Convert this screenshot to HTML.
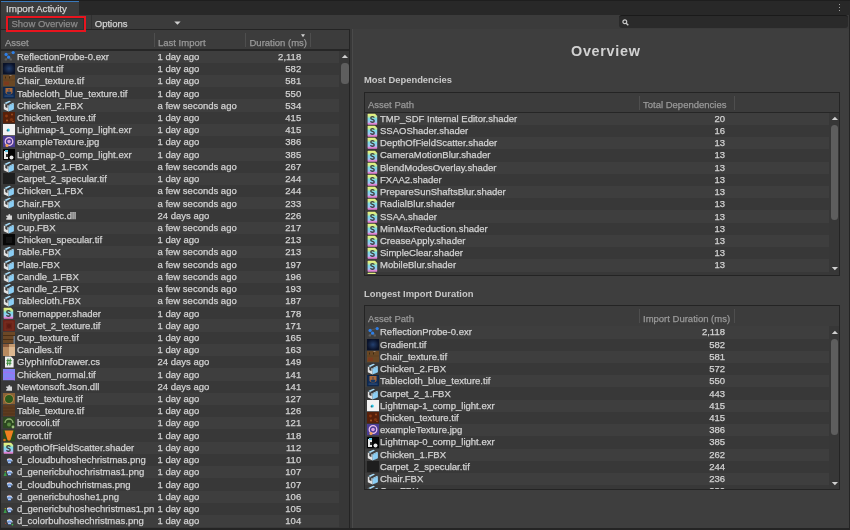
<!DOCTYPE html>
<html><head><meta charset="utf-8"><style>
*{box-sizing:border-box;margin:0;padding:0}
html,body{width:850px;height:530px;overflow:hidden;background:#282828}
#root{position:absolute;left:0;top:0;width:850px;height:530px;will-change:transform;overflow:hidden}
body{position:relative;font-family:"Liberation Sans",sans-serif;font-size:9.5px;color:#d2d2d2}
.a{position:absolute}
.t{position:absolute;white-space:nowrap;line-height:12px;top:0;-webkit-text-stroke:0.25px currentColor}
.ht{color:#999999}
.bold{font-weight:bold;font-size:9.4px;color:#c8c8c8;-webkit-text-stroke:0}
.hdr{background:#3c3c3c;border-bottom:2px solid #262626}
.sep{position:absolute;width:1px;background:#4e4e4e}
.row{position:absolute;height:12.22px}
.ic{position:absolute;display:block;width:12px;height:12px}
.sb{background:#373737}
.thumb{position:absolute;background:#5e5e5e;border-radius:3.5px}
.tri-u{position:absolute;width:0;height:0;border-left:3px solid transparent;border-right:3px solid transparent;border-bottom:3.5px solid #c4c4c4}
.tri-d{position:absolute;width:0;height:0;border-left:3px solid transparent;border-right:3px solid transparent;border-top:3.5px solid #c4c4c4}
.tri-s{position:absolute;width:0;height:0;border-left:1.8px solid transparent;border-right:1.8px solid transparent;border-top:2.9px solid #d0d0d0}
.tri-d.big{border-left-width:3.1px;border-right-width:3.1px;border-top-width:3.4px}
</style></head><body><div id="root">

<div class="a" style="left:0;top:29px;width:350px;height:501px;background:#383838;border:1px solid #242424;border-right-color:#242424"></div>
<div class="a hdr" style="left:1px;top:30px;width:348px;height:21px"></div>
<div class="sep" style="left:153.8px;top:33px;height:14.2px"></div>
<div class="sep" style="left:245px;top:33px;height:14.2px"></div>
<div class="sep" style="left:310px;top:33px;height:14.2px"></div>
<span class="t ht" style="left:5px;top:37.2px">Asset</span>
<span class="t ht" style="left:158px;top:37.2px">Last Import</span>
<span class="t ht" style="left:249.5px;top:37.2px">Duration (ms)</span>
<svg class="a" style="left:300px;top:33px" width="6" height="5" viewBox="0 0 6 5"><path d="M1 1.2 L5 1.2 L3 4.2 Z" fill="#d0d0d0"/></svg>
<div class="a" style="left:1px;top:51px;width:338px;height:477px;overflow:hidden"></div>
<div class="a" style="left:0;top:0;width:339px;height:528px;overflow:hidden"><div class="row" style="left:1px;top:50.60px;width:338px;background:#3e3e3e"><svg class="ic" style="left:2px;top:0.2px" width="12" height="12" viewBox="0 0 12 12"><path d="M3 3.3 L10.2 1.4 M5.5 6.2 L2.8 8.2 M5.5 6.2 L7.8 8.2" stroke="#5a5a5a" stroke-width="0.8" fill="none"/><circle cx="2.8" cy="8.4" r="1.2" fill="#5e5e5e"/><circle cx="7.8" cy="8.4" r="1.2" fill="#5e5e5e"/><circle cx="3.1" cy="3.4" r="1.6" fill="#2f7fe6"/><circle cx="5.6" cy="6.2" r="1.6" fill="#2f7fe6"/><circle cx="10.2" cy="1.6" r="1.6" fill="#2f7fe6"/></svg><span class="t" style="left:16px;top:0.3px;width:136.5px;overflow:hidden">ReflectionProbe-0.exr</span><span class="t" style="left:156.5px;top:0.3px">1 day ago</span><span class="t" style="left:239.2px;top:0.3px;width:61px;text-align:right">2,118</span></div><div class="row" style="left:1px;top:62.82px;width:338px;background:#383838"><svg class="ic" style="left:2px;top:0.2px" width="12" height="12" viewBox="0 0 12 12"><defs><radialGradient id="g1"><stop offset="0" stop-color="#24406f"/><stop offset="1" stop-color="#0a1228"/></radialGradient></defs><rect x="0" y="0" width="12" height="11.2" fill="url(#g1)"/></svg><span class="t" style="left:16px;top:0.3px;width:136.5px;overflow:hidden">Gradient.tif</span><span class="t" style="left:156.5px;top:0.3px">1 day ago</span><span class="t" style="left:239.2px;top:0.3px;width:61px;text-align:right">582</span></div><div class="row" style="left:1px;top:75.04px;width:338px;background:#3e3e3e"><svg class="ic" style="left:2px;top:0.2px" width="12" height="12" viewBox="0 0 12 12"><rect x="0" y="0" width="12" height="11.2" fill="#6a4824"/><rect x="1" y="6.5" width="5" height="3.5" fill="#7c3a1e"/><rect x="2" y="1.5" width="1" height="2" fill="#3a2812"/><rect x="6" y="1.5" width="1" height="2" fill="#3a2812"/><rect x="6.5" y="0" width="2" height="0.8" fill="#a09080"/><path d="M0 5 H12" stroke="#5a3a1c" stroke-width="0.5"/></svg><span class="t" style="left:16px;top:0.3px;width:136.5px;overflow:hidden">Chair_texture.tif</span><span class="t" style="left:156.5px;top:0.3px">1 day ago</span><span class="t" style="left:239.2px;top:0.3px;width:61px;text-align:right">581</span></div><div class="row" style="left:1px;top:87.26px;width:338px;background:#383838"><svg class="ic" style="left:2px;top:0.2px" width="12" height="12" viewBox="0 0 12 12"><rect x="0" y="0" width="12" height="11.2" fill="#13305a"/><rect x="0.8" y="0.4" width="10.4" height="10.4" fill="none" stroke="#0c2242" stroke-width="0.8"/><path d="M2.5 1 L9.5 1 L9.5 6 Q6 9 2.5 6 Z" fill="#a8683a"/><path d="M3.5 5 Q6 4 8.5 5 Q8 7.5 6 7.6 Q4 7.5 3.5 5 Z" fill="#143866"/><circle cx="6" cy="3" r="0.8" fill="#2a3a5a"/><rect x="1.5" y="8.5" width="9" height="1.2" fill="#2a4a7a"/></svg><span class="t" style="left:16px;top:0.3px;width:136.5px;overflow:hidden">Tablecloth_blue_texture.tif</span><span class="t" style="left:156.5px;top:0.3px">1 day ago</span><span class="t" style="left:239.2px;top:0.3px;width:61px;text-align:right">550</span></div><div class="row" style="left:1px;top:99.48px;width:338px;background:#3e3e3e"><svg class="ic" style="left:2px;top:0.2px" width="12" height="12" viewBox="0 0 12 12"><path d="M0.8 3.6 L5.6 5.8 L5.6 11.5 L0.8 9.3 Z" fill="#e2e2e2"/><path d="M2.3 4.3 L4.4 5.3 L4.4 8.3 L2.3 7.1 Z" fill="#3c3c3c"/><path d="M5.6 5.8 L10.9 3.4 L10.9 9.3 L5.6 11.5 Z" fill="#8ed0f6"/><path d="M8.2 4.6 L8.2 10.4" stroke="#7cc0e8" stroke-width="0.5"/><path d="M1.3 3.1 L6.3 0.7 L8 1.6 L3.1 4 Z" fill="#a6daf6"/><path d="M5.2 5.2 L10.2 2.8 L10.9 3.4 L5.6 5.8 Z" fill="#a6daf6"/></svg><span class="t" style="left:16px;top:0.3px;width:136.5px;overflow:hidden">Chicken_2.FBX</span><span class="t" style="left:156.5px;top:0.3px">a few seconds ago</span><span class="t" style="left:239.2px;top:0.3px;width:61px;text-align:right">534</span></div><div class="row" style="left:1px;top:111.70px;width:338px;background:#383838"><svg class="ic" style="left:2px;top:0.2px" width="12" height="12" viewBox="0 0 12 12"><rect x="0" y="0" width="12" height="11.2" fill="#56200a"/><circle cx="3.5" cy="4" r="1.4" fill="#8a3812"/><circle cx="8.5" cy="7.5" r="1.6" fill="#7e3410"/><circle cx="4" cy="8.5" r="0.9" fill="#b0602a"/><circle cx="9" cy="2.5" r="0.9" fill="#a05020"/><circle cx="10" cy="9.5" r="0.6" fill="#c07030"/></svg><span class="t" style="left:16px;top:0.3px;width:136.5px;overflow:hidden">Chicken_texture.tif</span><span class="t" style="left:156.5px;top:0.3px">1 day ago</span><span class="t" style="left:239.2px;top:0.3px;width:61px;text-align:right">415</span></div><div class="row" style="left:1px;top:123.92px;width:338px;background:#3e3e3e"><svg class="ic" style="left:2px;top:0.2px" width="12" height="12" viewBox="0 0 12 12"><rect x="0" y="0" width="12" height="11.2" fill="#f2f2f2"/><circle cx="5.3" cy="6" r="1.5" fill="#2ad0f0"/><circle cx="4.5" cy="6.5" r="1" fill="#203040" opacity="0.6"/></svg><span class="t" style="left:16px;top:0.3px;width:136.5px;overflow:hidden">Lightmap-1_comp_light.exr</span><span class="t" style="left:156.5px;top:0.3px">1 day ago</span><span class="t" style="left:239.2px;top:0.3px;width:61px;text-align:right">415</span></div><div class="row" style="left:1px;top:136.14px;width:338px;background:#383838"><svg class="ic" style="left:2px;top:0.2px" width="12" height="12" viewBox="0 0 12 12"><rect x="0" y="0" width="12" height="11.2" fill="#4a3c94"/><circle cx="6" cy="5.5" r="3.8" fill="none" stroke="#e8c0e8" stroke-width="1.3"/><circle cx="6" cy="5.5" r="1.8" fill="#d8a0e0"/><circle cx="4" cy="9.5" r="1.6" fill="#f0a050"/></svg><span class="t" style="left:16px;top:0.3px;width:136.5px;overflow:hidden">exampleTexture.jpg</span><span class="t" style="left:156.5px;top:0.3px">1 day ago</span><span class="t" style="left:239.2px;top:0.3px;width:61px;text-align:right">386</span></div><div class="row" style="left:1px;top:148.36px;width:338px;background:#3e3e3e"><svg class="ic" style="left:2px;top:0.2px" width="12" height="12" viewBox="0 0 12 12"><rect x="0" y="0" width="12" height="11.2" fill="#050505"/><rect x="1" y="2" width="4" height="8" fill="#e8e8e8"/><rect x="2" y="1" width="3" height="2" fill="#60c8e8"/><circle cx="8.5" cy="8.5" r="2" fill="#e8e8e8"/><rect x="3" y="5" width="2" height="3" fill="#303030"/></svg><span class="t" style="left:16px;top:0.3px;width:136.5px;overflow:hidden">Lightmap-0_comp_light.exr</span><span class="t" style="left:156.5px;top:0.3px">1 day ago</span><span class="t" style="left:239.2px;top:0.3px;width:61px;text-align:right">385</span></div><div class="row" style="left:1px;top:160.58px;width:338px;background:#383838"><svg class="ic" style="left:2px;top:0.2px" width="12" height="12" viewBox="0 0 12 12"><path d="M0.8 3.6 L5.6 5.8 L5.6 11.5 L0.8 9.3 Z" fill="#e2e2e2"/><path d="M2.3 4.3 L4.4 5.3 L4.4 8.3 L2.3 7.1 Z" fill="#3c3c3c"/><path d="M5.6 5.8 L10.9 3.4 L10.9 9.3 L5.6 11.5 Z" fill="#8ed0f6"/><path d="M8.2 4.6 L8.2 10.4" stroke="#7cc0e8" stroke-width="0.5"/><path d="M1.3 3.1 L6.3 0.7 L8 1.6 L3.1 4 Z" fill="#a6daf6"/><path d="M5.2 5.2 L10.2 2.8 L10.9 3.4 L5.6 5.8 Z" fill="#a6daf6"/></svg><span class="t" style="left:16px;top:0.3px;width:136.5px;overflow:hidden">Carpet_2_1.FBX</span><span class="t" style="left:156.5px;top:0.3px">a few seconds ago</span><span class="t" style="left:239.2px;top:0.3px;width:61px;text-align:right">267</span></div><div class="row" style="left:1px;top:172.80px;width:338px;background:#3e3e3e"><svg class="ic" style="left:2px;top:0.2px" width="12" height="12" viewBox="0 0 12 12"><rect x="0" y="0" width="12" height="11.2" fill="#1e1e1e"/></svg><span class="t" style="left:16px;top:0.3px;width:136.5px;overflow:hidden">Carpet_2_specular.tif</span><span class="t" style="left:156.5px;top:0.3px">1 day ago</span><span class="t" style="left:239.2px;top:0.3px;width:61px;text-align:right">244</span></div><div class="row" style="left:1px;top:185.02px;width:338px;background:#383838"><svg class="ic" style="left:2px;top:0.2px" width="12" height="12" viewBox="0 0 12 12"><path d="M0.8 3.6 L5.6 5.8 L5.6 11.5 L0.8 9.3 Z" fill="#e2e2e2"/><path d="M2.3 4.3 L4.4 5.3 L4.4 8.3 L2.3 7.1 Z" fill="#3c3c3c"/><path d="M5.6 5.8 L10.9 3.4 L10.9 9.3 L5.6 11.5 Z" fill="#8ed0f6"/><path d="M8.2 4.6 L8.2 10.4" stroke="#7cc0e8" stroke-width="0.5"/><path d="M1.3 3.1 L6.3 0.7 L8 1.6 L3.1 4 Z" fill="#a6daf6"/><path d="M5.2 5.2 L10.2 2.8 L10.9 3.4 L5.6 5.8 Z" fill="#a6daf6"/></svg><span class="t" style="left:16px;top:0.3px;width:136.5px;overflow:hidden">Chicken_1.FBX</span><span class="t" style="left:156.5px;top:0.3px">a few seconds ago</span><span class="t" style="left:239.2px;top:0.3px;width:61px;text-align:right">244</span></div><div class="row" style="left:1px;top:197.24px;width:338px;background:#3e3e3e"><svg class="ic" style="left:2px;top:0.2px" width="12" height="12" viewBox="0 0 12 12"><path d="M0.8 3.6 L5.6 5.8 L5.6 11.5 L0.8 9.3 Z" fill="#e2e2e2"/><path d="M2.3 4.3 L4.4 5.3 L4.4 8.3 L2.3 7.1 Z" fill="#3c3c3c"/><path d="M5.6 5.8 L10.9 3.4 L10.9 9.3 L5.6 11.5 Z" fill="#8ed0f6"/><path d="M8.2 4.6 L8.2 10.4" stroke="#7cc0e8" stroke-width="0.5"/><path d="M1.3 3.1 L6.3 0.7 L8 1.6 L3.1 4 Z" fill="#a6daf6"/><path d="M5.2 5.2 L10.2 2.8 L10.9 3.4 L5.6 5.8 Z" fill="#a6daf6"/></svg><span class="t" style="left:16px;top:0.3px;width:136.5px;overflow:hidden">Chair.FBX</span><span class="t" style="left:156.5px;top:0.3px">a few seconds ago</span><span class="t" style="left:239.2px;top:0.3px;width:61px;text-align:right">233</span></div><div class="row" style="left:1px;top:209.46px;width:338px;background:#383838"><svg class="ic" style="left:2px;top:0.2px" width="12" height="12" viewBox="0 0 12 12"><path d="M3.2 5.4 L5.4 5.4 L5.4 4.5 Q6.3 3.5 7.2 4.5 L7.2 5.4 L9 5.4 L9 9.8 L3.2 9.8 L3.2 8.4 Q4.4 8.4 4.4 7.6 Q4.4 6.8 3.2 6.8 Z" fill="#d6d6d6"/></svg><span class="t" style="left:16px;top:0.3px;width:136.5px;overflow:hidden">unityplastic.dll</span><span class="t" style="left:156.5px;top:0.3px">24 days ago</span><span class="t" style="left:239.2px;top:0.3px;width:61px;text-align:right">226</span></div><div class="row" style="left:1px;top:221.68px;width:338px;background:#3e3e3e"><svg class="ic" style="left:2px;top:0.2px" width="12" height="12" viewBox="0 0 12 12"><path d="M0.8 3.6 L5.6 5.8 L5.6 11.5 L0.8 9.3 Z" fill="#e2e2e2"/><path d="M2.3 4.3 L4.4 5.3 L4.4 8.3 L2.3 7.1 Z" fill="#3c3c3c"/><path d="M5.6 5.8 L10.9 3.4 L10.9 9.3 L5.6 11.5 Z" fill="#8ed0f6"/><path d="M8.2 4.6 L8.2 10.4" stroke="#7cc0e8" stroke-width="0.5"/><path d="M1.3 3.1 L6.3 0.7 L8 1.6 L3.1 4 Z" fill="#a6daf6"/><path d="M5.2 5.2 L10.2 2.8 L10.9 3.4 L5.6 5.8 Z" fill="#a6daf6"/></svg><span class="t" style="left:16px;top:0.3px;width:136.5px;overflow:hidden">Cup.FBX</span><span class="t" style="left:156.5px;top:0.3px">a few seconds ago</span><span class="t" style="left:239.2px;top:0.3px;width:61px;text-align:right">217</span></div><div class="row" style="left:1px;top:233.90px;width:338px;background:#383838"><svg class="ic" style="left:2px;top:0.2px" width="12" height="12" viewBox="0 0 12 12"><rect x="0" y="0" width="12" height="11.2" fill="#070707"/><rect x="3" y="3" width="6" height="6" fill="#141414"/></svg><span class="t" style="left:16px;top:0.3px;width:136.5px;overflow:hidden">Chicken_specular.tif</span><span class="t" style="left:156.5px;top:0.3px">1 day ago</span><span class="t" style="left:239.2px;top:0.3px;width:61px;text-align:right">213</span></div><div class="row" style="left:1px;top:246.12px;width:338px;background:#3e3e3e"><svg class="ic" style="left:2px;top:0.2px" width="12" height="12" viewBox="0 0 12 12"><path d="M0.8 3.6 L5.6 5.8 L5.6 11.5 L0.8 9.3 Z" fill="#e2e2e2"/><path d="M2.3 4.3 L4.4 5.3 L4.4 8.3 L2.3 7.1 Z" fill="#3c3c3c"/><path d="M5.6 5.8 L10.9 3.4 L10.9 9.3 L5.6 11.5 Z" fill="#8ed0f6"/><path d="M8.2 4.6 L8.2 10.4" stroke="#7cc0e8" stroke-width="0.5"/><path d="M1.3 3.1 L6.3 0.7 L8 1.6 L3.1 4 Z" fill="#a6daf6"/><path d="M5.2 5.2 L10.2 2.8 L10.9 3.4 L5.6 5.8 Z" fill="#a6daf6"/></svg><span class="t" style="left:16px;top:0.3px;width:136.5px;overflow:hidden">Table.FBX</span><span class="t" style="left:156.5px;top:0.3px">a few seconds ago</span><span class="t" style="left:239.2px;top:0.3px;width:61px;text-align:right">213</span></div><div class="row" style="left:1px;top:258.34px;width:338px;background:#383838"><svg class="ic" style="left:2px;top:0.2px" width="12" height="12" viewBox="0 0 12 12"><path d="M0.8 3.6 L5.6 5.8 L5.6 11.5 L0.8 9.3 Z" fill="#e2e2e2"/><path d="M2.3 4.3 L4.4 5.3 L4.4 8.3 L2.3 7.1 Z" fill="#3c3c3c"/><path d="M5.6 5.8 L10.9 3.4 L10.9 9.3 L5.6 11.5 Z" fill="#8ed0f6"/><path d="M8.2 4.6 L8.2 10.4" stroke="#7cc0e8" stroke-width="0.5"/><path d="M1.3 3.1 L6.3 0.7 L8 1.6 L3.1 4 Z" fill="#a6daf6"/><path d="M5.2 5.2 L10.2 2.8 L10.9 3.4 L5.6 5.8 Z" fill="#a6daf6"/></svg><span class="t" style="left:16px;top:0.3px;width:136.5px;overflow:hidden">Plate.FBX</span><span class="t" style="left:156.5px;top:0.3px">a few seconds ago</span><span class="t" style="left:239.2px;top:0.3px;width:61px;text-align:right">197</span></div><div class="row" style="left:1px;top:270.56px;width:338px;background:#3e3e3e"><svg class="ic" style="left:2px;top:0.2px" width="12" height="12" viewBox="0 0 12 12"><path d="M0.8 3.6 L5.6 5.8 L5.6 11.5 L0.8 9.3 Z" fill="#e2e2e2"/><path d="M2.3 4.3 L4.4 5.3 L4.4 8.3 L2.3 7.1 Z" fill="#3c3c3c"/><path d="M5.6 5.8 L10.9 3.4 L10.9 9.3 L5.6 11.5 Z" fill="#8ed0f6"/><path d="M8.2 4.6 L8.2 10.4" stroke="#7cc0e8" stroke-width="0.5"/><path d="M1.3 3.1 L6.3 0.7 L8 1.6 L3.1 4 Z" fill="#a6daf6"/><path d="M5.2 5.2 L10.2 2.8 L10.9 3.4 L5.6 5.8 Z" fill="#a6daf6"/></svg><span class="t" style="left:16px;top:0.3px;width:136.5px;overflow:hidden">Candle_1.FBX</span><span class="t" style="left:156.5px;top:0.3px">a few seconds ago</span><span class="t" style="left:239.2px;top:0.3px;width:61px;text-align:right">196</span></div><div class="row" style="left:1px;top:282.78px;width:338px;background:#383838"><svg class="ic" style="left:2px;top:0.2px" width="12" height="12" viewBox="0 0 12 12"><path d="M0.8 3.6 L5.6 5.8 L5.6 11.5 L0.8 9.3 Z" fill="#e2e2e2"/><path d="M2.3 4.3 L4.4 5.3 L4.4 8.3 L2.3 7.1 Z" fill="#3c3c3c"/><path d="M5.6 5.8 L10.9 3.4 L10.9 9.3 L5.6 11.5 Z" fill="#8ed0f6"/><path d="M8.2 4.6 L8.2 10.4" stroke="#7cc0e8" stroke-width="0.5"/><path d="M1.3 3.1 L6.3 0.7 L8 1.6 L3.1 4 Z" fill="#a6daf6"/><path d="M5.2 5.2 L10.2 2.8 L10.9 3.4 L5.6 5.8 Z" fill="#a6daf6"/></svg><span class="t" style="left:16px;top:0.3px;width:136.5px;overflow:hidden">Candle_2.FBX</span><span class="t" style="left:156.5px;top:0.3px">a few seconds ago</span><span class="t" style="left:239.2px;top:0.3px;width:61px;text-align:right">193</span></div><div class="row" style="left:1px;top:295.00px;width:338px;background:#3e3e3e"><svg class="ic" style="left:2px;top:0.2px" width="12" height="12" viewBox="0 0 12 12"><path d="M0.8 3.6 L5.6 5.8 L5.6 11.5 L0.8 9.3 Z" fill="#e2e2e2"/><path d="M2.3 4.3 L4.4 5.3 L4.4 8.3 L2.3 7.1 Z" fill="#3c3c3c"/><path d="M5.6 5.8 L10.9 3.4 L10.9 9.3 L5.6 11.5 Z" fill="#8ed0f6"/><path d="M8.2 4.6 L8.2 10.4" stroke="#7cc0e8" stroke-width="0.5"/><path d="M1.3 3.1 L6.3 0.7 L8 1.6 L3.1 4 Z" fill="#a6daf6"/><path d="M5.2 5.2 L10.2 2.8 L10.9 3.4 L5.6 5.8 Z" fill="#a6daf6"/></svg><span class="t" style="left:16px;top:0.3px;width:136.5px;overflow:hidden">Tablecloth.FBX</span><span class="t" style="left:156.5px;top:0.3px">a few seconds ago</span><span class="t" style="left:239.2px;top:0.3px;width:61px;text-align:right">187</span></div><div class="row" style="left:1px;top:307.22px;width:338px;background:#383838"><svg class="ic" style="left:2px;top:0.2px" width="12" height="12" viewBox="0 0 12 12"><defs><linearGradient id="sg" x1="0" y1="0" x2="0" y2="1"><stop offset="0" stop-color="#eaf07a"/><stop offset="0.2" stop-color="#d6ee88"/><stop offset="0.45" stop-color="#78dcea"/><stop offset="0.7" stop-color="#9cc8f2"/><stop offset="0.8" stop-color="#b0b8f0"/><stop offset="0.83" stop-color="#e08ad8"/><stop offset="1" stop-color="#e080d2"/></linearGradient></defs><path d="M0.6 1.4 Q0.6 0.8 1.2 0.8 L8 0.8 L10.2 3 L10.2 11.1 Q10.2 11.7 9.6 11.7 L1.2 11.7 Q0.6 11.7 0.6 11.1 Z" fill="url(#sg)"/><path d="M7.2 4.6 Q7 3.6 5.4 3.6 Q3.8 3.6 3.8 4.9 Q3.8 6 5.4 6.3 Q7.2 6.6 7.2 7.9 Q7.2 9.2 5.4 9.2 Q3.8 9.2 3.6 8.1" fill="none" stroke="#3a3a3a" stroke-width="1.35"/></svg><span class="t" style="left:16px;top:0.3px;width:136.5px;overflow:hidden">Tonemapper.shader</span><span class="t" style="left:156.5px;top:0.3px">1 day ago</span><span class="t" style="left:239.2px;top:0.3px;width:61px;text-align:right">178</span></div><div class="row" style="left:1px;top:319.44px;width:338px;background:#3e3e3e"><svg class="ic" style="left:2px;top:0.2px" width="12" height="12" viewBox="0 0 12 12"><rect x="0" y="0" width="12" height="11.2" fill="#6a2218"/><rect x="2" y="2" width="8" height="8" fill="none" stroke="#7e3020" stroke-width="1"/><circle cx="6" cy="6" r="2" fill="#5a1a12"/></svg><span class="t" style="left:16px;top:0.3px;width:136.5px;overflow:hidden">Carpet_2_texture.tif</span><span class="t" style="left:156.5px;top:0.3px">1 day ago</span><span class="t" style="left:239.2px;top:0.3px;width:61px;text-align:right">171</span></div><div class="row" style="left:1px;top:331.66px;width:338px;background:#383838"><svg class="ic" style="left:2px;top:0.2px" width="12" height="12" viewBox="0 0 12 12"><rect x="0" y="0" width="12" height="11.2" fill="#6c4826"/><rect x="0" y="3" width="12" height="1" fill="#4a2e14"/><rect x="0" y="7" width="12" height="1" fill="#4a2e14"/><rect x="10.5" y="4" width="1.5" height="8" fill="#6e7a88"/></svg><span class="t" style="left:16px;top:0.3px;width:136.5px;overflow:hidden">Cup_texture.tif</span><span class="t" style="left:156.5px;top:0.3px">1 day ago</span><span class="t" style="left:239.2px;top:0.3px;width:61px;text-align:right">165</span></div><div class="row" style="left:1px;top:343.88px;width:338px;background:#3e3e3e"><svg class="ic" style="left:2px;top:0.2px" width="12" height="12" viewBox="0 0 12 12"><rect x="0" y="0" width="12" height="11.2" fill="#c49a70"/><rect x="0" y="0" width="6" height="3" fill="#8a5a3a"/><rect x="6" y="3" width="6" height="9" fill="#dcb890"/><rect x="0" y="3" width="6" height="9" fill="#b88a60"/></svg><span class="t" style="left:16px;top:0.3px;width:136.5px;overflow:hidden">Candles.tif</span><span class="t" style="left:156.5px;top:0.3px">1 day ago</span><span class="t" style="left:239.2px;top:0.3px;width:61px;text-align:right">163</span></div><div class="row" style="left:1px;top:356.10px;width:338px;background:#383838"><svg class="ic" style="left:2px;top:0.2px" width="12" height="12" viewBox="0 0 12 12"><path d="M2 0.6 L8 0.6 L10.6 3.2 L10.6 11.4 L2 11.4 Z" fill="#f0f0f0"/><path d="M5 2.5 L4.5 9.5 M7.3 2.5 L6.8 9.5 M3.5 4.6 L8.6 4.6 M3.3 7.3 L8.4 7.3" stroke="#3a8a3a" stroke-width="1.1" fill="none"/></svg><span class="t" style="left:16px;top:0.3px;width:136.5px;overflow:hidden">GlyphInfoDrawer.cs</span><span class="t" style="left:156.5px;top:0.3px">24 days ago</span><span class="t" style="left:239.2px;top:0.3px;width:61px;text-align:right">149</span></div><div class="row" style="left:1px;top:368.32px;width:338px;background:#3e3e3e"><svg class="ic" style="left:2px;top:0.2px" width="12" height="12" viewBox="0 0 12 12"><rect x="0" y="0" width="12" height="11.2" fill="#8284f4"/><path d="M0 4 Q4 2 12 5 M2 10 Q6 8 12 11" stroke="#a070f0" stroke-width="1.2" fill="none"/></svg><span class="t" style="left:16px;top:0.3px;width:136.5px;overflow:hidden">Chicken_normal.tif</span><span class="t" style="left:156.5px;top:0.3px">1 day ago</span><span class="t" style="left:239.2px;top:0.3px;width:61px;text-align:right">141</span></div><div class="row" style="left:1px;top:380.54px;width:338px;background:#383838"><svg class="ic" style="left:2px;top:0.2px" width="12" height="12" viewBox="0 0 12 12"><path d="M3.2 5.4 L5.4 5.4 L5.4 4.5 Q6.3 3.5 7.2 4.5 L7.2 5.4 L9 5.4 L9 9.8 L3.2 9.8 L3.2 8.4 Q4.4 8.4 4.4 7.6 Q4.4 6.8 3.2 6.8 Z" fill="#d6d6d6"/></svg><span class="t" style="left:16px;top:0.3px;width:136.5px;overflow:hidden">Newtonsoft.Json.dll</span><span class="t" style="left:156.5px;top:0.3px">24 days ago</span><span class="t" style="left:239.2px;top:0.3px;width:61px;text-align:right">141</span></div><div class="row" style="left:1px;top:392.76px;width:338px;background:#3e3e3e"><svg class="ic" style="left:2px;top:0.2px" width="12" height="12" viewBox="0 0 12 12"><rect x="0" y="0" width="12" height="11.2" fill="#8a6236"/><circle cx="6" cy="6" r="4.8" fill="#c09050"/><circle cx="6" cy="6" r="4" fill="#2e5a1c"/></svg><span class="t" style="left:16px;top:0.3px;width:136.5px;overflow:hidden">Plate_texture.tif</span><span class="t" style="left:156.5px;top:0.3px">1 day ago</span><span class="t" style="left:239.2px;top:0.3px;width:61px;text-align:right">127</span></div><div class="row" style="left:1px;top:404.98px;width:338px;background:#383838"><svg class="ic" style="left:2px;top:0.2px" width="12" height="12" viewBox="0 0 12 12"><rect x="0" y="0" width="12" height="11.2" fill="#5e3c20"/><path d="M0 3 H12 M0 6 H12 M0 9 H12" stroke="#4a2c14" stroke-width="0.6"/></svg><span class="t" style="left:16px;top:0.3px;width:136.5px;overflow:hidden">Table_texture.tif</span><span class="t" style="left:156.5px;top:0.3px">1 day ago</span><span class="t" style="left:239.2px;top:0.3px;width:61px;text-align:right">126</span></div><div class="row" style="left:1px;top:417.20px;width:338px;background:#3e3e3e"><svg class="ic" style="left:2px;top:0.2px" width="12" height="12" viewBox="0 0 12 12"><rect x="0" y="0" width="12" height="11.2" fill="#2c4820"/><path d="M2 6 A4 4 0 0 1 10 6" stroke="#90b070" stroke-width="1.3" fill="none"/><circle cx="6" cy="7.5" r="2" fill="#5a8a40"/><circle cx="10" cy="10" r="1.4" fill="#a0c080"/></svg><span class="t" style="left:16px;top:0.3px;width:136.5px;overflow:hidden">broccoli.tif</span><span class="t" style="left:156.5px;top:0.3px">1 day ago</span><span class="t" style="left:239.2px;top:0.3px;width:61px;text-align:right">121</span></div><div class="row" style="left:1px;top:429.42px;width:338px;background:#383838"><svg class="ic" style="left:2px;top:0.2px" width="12" height="12" viewBox="0 0 12 12"><rect x="0" y="0" width="12" height="11.2" fill="#2a4a1c"/><path d="M1.5 0.5 L10.5 0.5 L7.5 10 Q6 11.5 4.5 10 Z" fill="#f08020"/><circle cx="1.5" cy="10" r="1.3" fill="#e07018"/></svg><span class="t" style="left:16px;top:0.3px;width:136.5px;overflow:hidden">carrot.tif</span><span class="t" style="left:156.5px;top:0.3px">1 day ago</span><span class="t" style="left:239.2px;top:0.3px;width:61px;text-align:right">118</span></div><div class="row" style="left:1px;top:441.64px;width:338px;background:#3e3e3e"><svg class="ic" style="left:2px;top:0.2px" width="12" height="12" viewBox="0 0 12 12"><defs><linearGradient id="sg" x1="0" y1="0" x2="0" y2="1"><stop offset="0" stop-color="#eaf07a"/><stop offset="0.2" stop-color="#d6ee88"/><stop offset="0.45" stop-color="#78dcea"/><stop offset="0.7" stop-color="#9cc8f2"/><stop offset="0.8" stop-color="#b0b8f0"/><stop offset="0.83" stop-color="#e08ad8"/><stop offset="1" stop-color="#e080d2"/></linearGradient></defs><path d="M0.6 1.4 Q0.6 0.8 1.2 0.8 L8 0.8 L10.2 3 L10.2 11.1 Q10.2 11.7 9.6 11.7 L1.2 11.7 Q0.6 11.7 0.6 11.1 Z" fill="url(#sg)"/><path d="M7.2 4.6 Q7 3.6 5.4 3.6 Q3.8 3.6 3.8 4.9 Q3.8 6 5.4 6.3 Q7.2 6.6 7.2 7.9 Q7.2 9.2 5.4 9.2 Q3.8 9.2 3.6 8.1" fill="none" stroke="#3a3a3a" stroke-width="1.35"/></svg><span class="t" style="left:16px;top:0.3px;width:136.5px;overflow:hidden">DepthOfFieldScatter.shader</span><span class="t" style="left:156.5px;top:0.3px">1 day ago</span><span class="t" style="left:239.2px;top:0.3px;width:61px;text-align:right">112</span></div><div class="row" style="left:1px;top:453.86px;width:338px;background:#383838"><svg class="ic" style="left:2px;top:0.2px" width="12" height="12" viewBox="0 0 12 12"><g transform="translate(6.6 6.4) scale(0.82) translate(-6.6 -6.4)"><ellipse cx="6.4" cy="6" rx="3.2" ry="2.3" fill="#e8f0f8"/><path d="M3.6 6 Q6.4 4.8 9.2 6 L9 6.9 L3.8 6.9 Z" fill="#4a80dc"/><path d="M4.2 7.6 L8.8 7.6 L8.3 10.2 L4.7 10.2 Z" fill="#3a70d0"/><rect x="4.7" y="8.5" width="3.6" height="0.9" fill="#e0eaf4"/><path d="M9.2 5.6 L11 7.2 L9.4 7.8" fill="#c0d8f0"/><path d="M5.2 4.1 Q6.4 2.2 7.8 3.8 Z" fill="#d43838"/></g></svg><span class="t" style="left:16px;top:0.3px;width:136.5px;overflow:hidden">d_cloudbuhoshechristmas.png</span><span class="t" style="left:156.5px;top:0.3px">1 day ago</span><span class="t" style="left:239.2px;top:0.3px;width:61px;text-align:right">110</span></div><div class="row" style="left:1px;top:466.08px;width:338px;background:#3e3e3e"><svg class="ic" style="left:2px;top:0.2px" width="12" height="12" viewBox="0 0 12 12"><g transform="translate(6.6 6.4) scale(0.82) translate(-6.6 -6.4)"><ellipse cx="6.4" cy="6" rx="3.2" ry="2.3" fill="#e8f0f8"/><path d="M3.6 6 Q6.4 4.8 9.2 6 L9 6.9 L3.8 6.9 Z" fill="#4a80dc"/><path d="M4.2 7.6 L8.8 7.6 L8.3 10.2 L4.7 10.2 Z" fill="#3a70d0"/><rect x="4.7" y="8.5" width="3.6" height="0.9" fill="#e0eaf4"/><path d="M9.2 5.6 L11 7.2 L9.4 7.8" fill="#c0d8f0"/><path d="M5.2 4.1 Q6.4 2.2 7.8 3.8 Z" fill="#d43838"/></g><path d="M2.2 5.2 L0.6 10 L3.8 10 Z" fill="#3a9a48"/><circle cx="2.2" cy="5.4" r="0.5" fill="#e0c020"/></svg><span class="t" style="left:16px;top:0.3px;width:136.5px;overflow:hidden">d_genericbuhochristmas1.png</span><span class="t" style="left:156.5px;top:0.3px">1 day ago</span><span class="t" style="left:239.2px;top:0.3px;width:61px;text-align:right">107</span></div><div class="row" style="left:1px;top:478.30px;width:338px;background:#383838"><svg class="ic" style="left:2px;top:0.2px" width="12" height="12" viewBox="0 0 12 12"><g transform="translate(6.6 6.4) scale(0.82) translate(-6.6 -6.4)"><ellipse cx="6.4" cy="6" rx="3.2" ry="2.3" fill="#e8f0f8"/><path d="M3.6 6 Q6.4 4.8 9.2 6 L9 6.9 L3.8 6.9 Z" fill="#4a80dc"/><path d="M4.2 7.6 L8.8 7.6 L8.3 10.2 L4.7 10.2 Z" fill="#3a70d0"/><rect x="4.7" y="8.5" width="3.6" height="0.9" fill="#e0eaf4"/><path d="M9.2 5.6 L11 7.2 L9.4 7.8" fill="#c0d8f0"/><path d="M5.2 4.1 Q6.4 2.2 7.8 3.8 Z" fill="#d43838"/></g></svg><span class="t" style="left:16px;top:0.3px;width:136.5px;overflow:hidden">d_cloudbuhochristmas.png</span><span class="t" style="left:156.5px;top:0.3px">1 day ago</span><span class="t" style="left:239.2px;top:0.3px;width:61px;text-align:right">107</span></div><div class="row" style="left:1px;top:490.52px;width:338px;background:#3e3e3e"><svg class="ic" style="left:2px;top:0.2px" width="12" height="12" viewBox="0 0 12 12"><g transform="translate(6.6 6.4) scale(0.82) translate(-6.6 -6.4)"><ellipse cx="6.4" cy="6" rx="3.2" ry="2.3" fill="#e8f0f8"/><path d="M3.6 6 Q6.4 4.8 9.2 6 L9 6.9 L3.8 6.9 Z" fill="#4a80dc"/><path d="M4.2 7.6 L8.8 7.6 L8.3 10.2 L4.7 10.2 Z" fill="#3a70d0"/><rect x="4.7" y="8.5" width="3.6" height="0.9" fill="#e0eaf4"/><path d="M9.2 5.6 L11 7.2 L9.4 7.8" fill="#c0d8f0"/><path d="M5.2 4.1 Q6.4 2.2 7.8 3.8 Z" fill="#d43838"/></g></svg><span class="t" style="left:16px;top:0.3px;width:136.5px;overflow:hidden">d_genericbuhoshe1.png</span><span class="t" style="left:156.5px;top:0.3px">1 day ago</span><span class="t" style="left:239.2px;top:0.3px;width:61px;text-align:right">106</span></div><div class="row" style="left:1px;top:502.74px;width:338px;background:#383838"><svg class="ic" style="left:2px;top:0.2px" width="12" height="12" viewBox="0 0 12 12"><g transform="translate(6.6 6.4) scale(0.82) translate(-6.6 -6.4)"><ellipse cx="6.4" cy="6" rx="3.2" ry="2.3" fill="#e8f0f8"/><path d="M3.6 6 Q6.4 4.8 9.2 6 L9 6.9 L3.8 6.9 Z" fill="#4a80dc"/><path d="M4.2 7.6 L8.8 7.6 L8.3 10.2 L4.7 10.2 Z" fill="#3a70d0"/><rect x="4.7" y="8.5" width="3.6" height="0.9" fill="#e0eaf4"/><path d="M9.2 5.6 L11 7.2 L9.4 7.8" fill="#c0d8f0"/><path d="M5.2 4.1 Q6.4 2.2 7.8 3.8 Z" fill="#d43838"/></g><path d="M2.2 5.2 L0.6 10 L3.8 10 Z" fill="#3a9a48"/><circle cx="2.2" cy="5.4" r="0.5" fill="#e0c020"/></svg><span class="t" style="left:16px;top:0.3px;width:136.5px;overflow:hidden">d_genericbuhoshechristmas1.png</span><span class="t" style="left:156.5px;top:0.3px">1 day ago</span><span class="t" style="left:239.2px;top:0.3px;width:61px;text-align:right">105</span></div><div class="row" style="left:1px;top:514.96px;width:338px;background:#3e3e3e"><svg class="ic" style="left:2px;top:0.2px" width="12" height="12" viewBox="0 0 12 12"><g transform="translate(6.6 6.4) scale(0.82) translate(-6.6 -6.4)"><ellipse cx="6.4" cy="6" rx="3.2" ry="2.3" fill="#e8f0f8"/><path d="M3.6 6 Q6.4 4.8 9.2 6 L9 6.9 L3.8 6.9 Z" fill="#4a80dc"/><path d="M4.2 7.6 L8.8 7.6 L8.3 10.2 L4.7 10.2 Z" fill="#3a70d0"/><rect x="4.7" y="8.5" width="3.6" height="0.9" fill="#e0eaf4"/><path d="M9.2 5.6 L11 7.2 L9.4 7.8" fill="#c0d8f0"/><path d="M5.2 4.1 Q6.4 2.2 7.8 3.8 Z" fill="#e0d040"/></g><circle cx="9.4" cy="9.6" r="0.9" fill="#40c050"/><path d="M2 8 L3.2 8.8" stroke="#c04030" stroke-width="0.7"/></svg><span class="t" style="left:16px;top:0.3px;width:136.5px;overflow:hidden">d_colorbuhoshechristmas.png</span><span class="t" style="left:156.5px;top:0.3px">1 day ago</span><span class="t" style="left:239.2px;top:0.3px;width:61px;text-align:right">104</span></div></div>
<div class="a sb" style="left:339px;top:51px;width:10px;height:477px"></div>
<svg class="a" style="left:341px;top:54px" width="8" height="5" viewBox="0 0 8 5"><path d="M0.8 4 L7 4 L3.9 0.8 Z" fill="#d0d0d0"/></svg>
<div class="thumb" style="left:341px;top:62.7px;width:7.5px;height:21.3px"></div>
<div class="a" style="left:350px;top:29px;width:1.5px;height:501px;background:#383838"></div>
<div class="a" style="left:351.8px;top:29px;width:1.5px;height:501px;background:#4a4a4a"></div>
<div class="a" style="left:353.3px;top:29px;width:496.7px;height:501px;background:#3e3e3e"></div>
<div class="a" style="left:848.6px;top:0;width:1.4px;height:530px;background:#242424"></div>
<span class="t" style="left:571px;top:43px;font-size:14.4px;font-weight:bold;color:#d2d2d2;line-height:16px;letter-spacing:0.7px;-webkit-text-stroke:0">Overview</span>
<span class="t bold" style="left:364px;top:74px">Most Dependencies</span>
<span class="t bold" style="left:364px;top:288px">Longest Import Duration</span>
<div class="a" style="left:364px;top:91.5px;width:476px;height:184.0px;background:#383838;border:1px solid #242424"></div><div class="a hdr" style="left:365px;top:92.5px;width:474px;height:20.9px;border-bottom-width:1.5px"></div><div class="sep" style="left:639px;top:95.5px;height:14px"></div><div class="sep" style="left:734.4px;top:95.5px;height:14px"></div><span class="t ht" style="left:368px;top:99.0px">Asset Path</span><span class="t ht" style="left:643px;top:99.0px">Total Dependencies</span><div class="a" style="left:365px;top:112.7px;width:464px;height:161.8px;overflow:hidden"><div class="row" style="left:0;top:0.00px;width:464px;background:#3e3e3e"><svg class="ic" style="left:2px;top:0.2px" width="12" height="12" viewBox="0 0 12 12"><defs><linearGradient id="sg" x1="0" y1="0" x2="0" y2="1"><stop offset="0" stop-color="#eaf07a"/><stop offset="0.2" stop-color="#d6ee88"/><stop offset="0.45" stop-color="#78dcea"/><stop offset="0.7" stop-color="#9cc8f2"/><stop offset="0.8" stop-color="#b0b8f0"/><stop offset="0.83" stop-color="#e08ad8"/><stop offset="1" stop-color="#e080d2"/></linearGradient></defs><path d="M0.6 1.4 Q0.6 0.8 1.2 0.8 L8 0.8 L10.2 3 L10.2 11.1 Q10.2 11.7 9.6 11.7 L1.2 11.7 Q0.6 11.7 0.6 11.1 Z" fill="url(#sg)"/><path d="M7.2 4.6 Q7 3.6 5.4 3.6 Q3.8 3.6 3.8 4.9 Q3.8 6 5.4 6.3 Q7.2 6.6 7.2 7.9 Q7.2 9.2 5.4 9.2 Q3.8 9.2 3.6 8.1" fill="none" stroke="#3a3a3a" stroke-width="1.35"/></svg><span class="t" style="left:15px;top:0.1px">TMP_SDF Internal Editor.shader</span><span class="t" style="left:299px;top:0.1px;width:61px;text-align:right">20</span></div><div class="row" style="left:0;top:12.22px;width:464px;background:#383838"><svg class="ic" style="left:2px;top:0.2px" width="12" height="12" viewBox="0 0 12 12"><defs><linearGradient id="sg" x1="0" y1="0" x2="0" y2="1"><stop offset="0" stop-color="#eaf07a"/><stop offset="0.2" stop-color="#d6ee88"/><stop offset="0.45" stop-color="#78dcea"/><stop offset="0.7" stop-color="#9cc8f2"/><stop offset="0.8" stop-color="#b0b8f0"/><stop offset="0.83" stop-color="#e08ad8"/><stop offset="1" stop-color="#e080d2"/></linearGradient></defs><path d="M0.6 1.4 Q0.6 0.8 1.2 0.8 L8 0.8 L10.2 3 L10.2 11.1 Q10.2 11.7 9.6 11.7 L1.2 11.7 Q0.6 11.7 0.6 11.1 Z" fill="url(#sg)"/><path d="M7.2 4.6 Q7 3.6 5.4 3.6 Q3.8 3.6 3.8 4.9 Q3.8 6 5.4 6.3 Q7.2 6.6 7.2 7.9 Q7.2 9.2 5.4 9.2 Q3.8 9.2 3.6 8.1" fill="none" stroke="#3a3a3a" stroke-width="1.35"/></svg><span class="t" style="left:15px;top:0.1px">SSAOShader.shader</span><span class="t" style="left:299px;top:0.1px;width:61px;text-align:right">16</span></div><div class="row" style="left:0;top:24.44px;width:464px;background:#3e3e3e"><svg class="ic" style="left:2px;top:0.2px" width="12" height="12" viewBox="0 0 12 12"><defs><linearGradient id="sg" x1="0" y1="0" x2="0" y2="1"><stop offset="0" stop-color="#eaf07a"/><stop offset="0.2" stop-color="#d6ee88"/><stop offset="0.45" stop-color="#78dcea"/><stop offset="0.7" stop-color="#9cc8f2"/><stop offset="0.8" stop-color="#b0b8f0"/><stop offset="0.83" stop-color="#e08ad8"/><stop offset="1" stop-color="#e080d2"/></linearGradient></defs><path d="M0.6 1.4 Q0.6 0.8 1.2 0.8 L8 0.8 L10.2 3 L10.2 11.1 Q10.2 11.7 9.6 11.7 L1.2 11.7 Q0.6 11.7 0.6 11.1 Z" fill="url(#sg)"/><path d="M7.2 4.6 Q7 3.6 5.4 3.6 Q3.8 3.6 3.8 4.9 Q3.8 6 5.4 6.3 Q7.2 6.6 7.2 7.9 Q7.2 9.2 5.4 9.2 Q3.8 9.2 3.6 8.1" fill="none" stroke="#3a3a3a" stroke-width="1.35"/></svg><span class="t" style="left:15px;top:0.1px">DepthOfFieldScatter.shader</span><span class="t" style="left:299px;top:0.1px;width:61px;text-align:right">13</span></div><div class="row" style="left:0;top:36.66px;width:464px;background:#383838"><svg class="ic" style="left:2px;top:0.2px" width="12" height="12" viewBox="0 0 12 12"><defs><linearGradient id="sg" x1="0" y1="0" x2="0" y2="1"><stop offset="0" stop-color="#eaf07a"/><stop offset="0.2" stop-color="#d6ee88"/><stop offset="0.45" stop-color="#78dcea"/><stop offset="0.7" stop-color="#9cc8f2"/><stop offset="0.8" stop-color="#b0b8f0"/><stop offset="0.83" stop-color="#e08ad8"/><stop offset="1" stop-color="#e080d2"/></linearGradient></defs><path d="M0.6 1.4 Q0.6 0.8 1.2 0.8 L8 0.8 L10.2 3 L10.2 11.1 Q10.2 11.7 9.6 11.7 L1.2 11.7 Q0.6 11.7 0.6 11.1 Z" fill="url(#sg)"/><path d="M7.2 4.6 Q7 3.6 5.4 3.6 Q3.8 3.6 3.8 4.9 Q3.8 6 5.4 6.3 Q7.2 6.6 7.2 7.9 Q7.2 9.2 5.4 9.2 Q3.8 9.2 3.6 8.1" fill="none" stroke="#3a3a3a" stroke-width="1.35"/></svg><span class="t" style="left:15px;top:0.1px">CameraMotionBlur.shader</span><span class="t" style="left:299px;top:0.1px;width:61px;text-align:right">13</span></div><div class="row" style="left:0;top:48.88px;width:464px;background:#3e3e3e"><svg class="ic" style="left:2px;top:0.2px" width="12" height="12" viewBox="0 0 12 12"><defs><linearGradient id="sg" x1="0" y1="0" x2="0" y2="1"><stop offset="0" stop-color="#eaf07a"/><stop offset="0.2" stop-color="#d6ee88"/><stop offset="0.45" stop-color="#78dcea"/><stop offset="0.7" stop-color="#9cc8f2"/><stop offset="0.8" stop-color="#b0b8f0"/><stop offset="0.83" stop-color="#e08ad8"/><stop offset="1" stop-color="#e080d2"/></linearGradient></defs><path d="M0.6 1.4 Q0.6 0.8 1.2 0.8 L8 0.8 L10.2 3 L10.2 11.1 Q10.2 11.7 9.6 11.7 L1.2 11.7 Q0.6 11.7 0.6 11.1 Z" fill="url(#sg)"/><path d="M7.2 4.6 Q7 3.6 5.4 3.6 Q3.8 3.6 3.8 4.9 Q3.8 6 5.4 6.3 Q7.2 6.6 7.2 7.9 Q7.2 9.2 5.4 9.2 Q3.8 9.2 3.6 8.1" fill="none" stroke="#3a3a3a" stroke-width="1.35"/></svg><span class="t" style="left:15px;top:0.1px">BlendModesOverlay.shader</span><span class="t" style="left:299px;top:0.1px;width:61px;text-align:right">13</span></div><div class="row" style="left:0;top:61.10px;width:464px;background:#383838"><svg class="ic" style="left:2px;top:0.2px" width="12" height="12" viewBox="0 0 12 12"><defs><linearGradient id="sg" x1="0" y1="0" x2="0" y2="1"><stop offset="0" stop-color="#eaf07a"/><stop offset="0.2" stop-color="#d6ee88"/><stop offset="0.45" stop-color="#78dcea"/><stop offset="0.7" stop-color="#9cc8f2"/><stop offset="0.8" stop-color="#b0b8f0"/><stop offset="0.83" stop-color="#e08ad8"/><stop offset="1" stop-color="#e080d2"/></linearGradient></defs><path d="M0.6 1.4 Q0.6 0.8 1.2 0.8 L8 0.8 L10.2 3 L10.2 11.1 Q10.2 11.7 9.6 11.7 L1.2 11.7 Q0.6 11.7 0.6 11.1 Z" fill="url(#sg)"/><path d="M7.2 4.6 Q7 3.6 5.4 3.6 Q3.8 3.6 3.8 4.9 Q3.8 6 5.4 6.3 Q7.2 6.6 7.2 7.9 Q7.2 9.2 5.4 9.2 Q3.8 9.2 3.6 8.1" fill="none" stroke="#3a3a3a" stroke-width="1.35"/></svg><span class="t" style="left:15px;top:0.1px">FXAA2.shader</span><span class="t" style="left:299px;top:0.1px;width:61px;text-align:right">13</span></div><div class="row" style="left:0;top:73.32px;width:464px;background:#3e3e3e"><svg class="ic" style="left:2px;top:0.2px" width="12" height="12" viewBox="0 0 12 12"><defs><linearGradient id="sg" x1="0" y1="0" x2="0" y2="1"><stop offset="0" stop-color="#eaf07a"/><stop offset="0.2" stop-color="#d6ee88"/><stop offset="0.45" stop-color="#78dcea"/><stop offset="0.7" stop-color="#9cc8f2"/><stop offset="0.8" stop-color="#b0b8f0"/><stop offset="0.83" stop-color="#e08ad8"/><stop offset="1" stop-color="#e080d2"/></linearGradient></defs><path d="M0.6 1.4 Q0.6 0.8 1.2 0.8 L8 0.8 L10.2 3 L10.2 11.1 Q10.2 11.7 9.6 11.7 L1.2 11.7 Q0.6 11.7 0.6 11.1 Z" fill="url(#sg)"/><path d="M7.2 4.6 Q7 3.6 5.4 3.6 Q3.8 3.6 3.8 4.9 Q3.8 6 5.4 6.3 Q7.2 6.6 7.2 7.9 Q7.2 9.2 5.4 9.2 Q3.8 9.2 3.6 8.1" fill="none" stroke="#3a3a3a" stroke-width="1.35"/></svg><span class="t" style="left:15px;top:0.1px">PrepareSunShaftsBlur.shader</span><span class="t" style="left:299px;top:0.1px;width:61px;text-align:right">13</span></div><div class="row" style="left:0;top:85.54px;width:464px;background:#383838"><svg class="ic" style="left:2px;top:0.2px" width="12" height="12" viewBox="0 0 12 12"><defs><linearGradient id="sg" x1="0" y1="0" x2="0" y2="1"><stop offset="0" stop-color="#eaf07a"/><stop offset="0.2" stop-color="#d6ee88"/><stop offset="0.45" stop-color="#78dcea"/><stop offset="0.7" stop-color="#9cc8f2"/><stop offset="0.8" stop-color="#b0b8f0"/><stop offset="0.83" stop-color="#e08ad8"/><stop offset="1" stop-color="#e080d2"/></linearGradient></defs><path d="M0.6 1.4 Q0.6 0.8 1.2 0.8 L8 0.8 L10.2 3 L10.2 11.1 Q10.2 11.7 9.6 11.7 L1.2 11.7 Q0.6 11.7 0.6 11.1 Z" fill="url(#sg)"/><path d="M7.2 4.6 Q7 3.6 5.4 3.6 Q3.8 3.6 3.8 4.9 Q3.8 6 5.4 6.3 Q7.2 6.6 7.2 7.9 Q7.2 9.2 5.4 9.2 Q3.8 9.2 3.6 8.1" fill="none" stroke="#3a3a3a" stroke-width="1.35"/></svg><span class="t" style="left:15px;top:0.1px">RadialBlur.shader</span><span class="t" style="left:299px;top:0.1px;width:61px;text-align:right">13</span></div><div class="row" style="left:0;top:97.76px;width:464px;background:#3e3e3e"><svg class="ic" style="left:2px;top:0.2px" width="12" height="12" viewBox="0 0 12 12"><defs><linearGradient id="sg" x1="0" y1="0" x2="0" y2="1"><stop offset="0" stop-color="#eaf07a"/><stop offset="0.2" stop-color="#d6ee88"/><stop offset="0.45" stop-color="#78dcea"/><stop offset="0.7" stop-color="#9cc8f2"/><stop offset="0.8" stop-color="#b0b8f0"/><stop offset="0.83" stop-color="#e08ad8"/><stop offset="1" stop-color="#e080d2"/></linearGradient></defs><path d="M0.6 1.4 Q0.6 0.8 1.2 0.8 L8 0.8 L10.2 3 L10.2 11.1 Q10.2 11.7 9.6 11.7 L1.2 11.7 Q0.6 11.7 0.6 11.1 Z" fill="url(#sg)"/><path d="M7.2 4.6 Q7 3.6 5.4 3.6 Q3.8 3.6 3.8 4.9 Q3.8 6 5.4 6.3 Q7.2 6.6 7.2 7.9 Q7.2 9.2 5.4 9.2 Q3.8 9.2 3.6 8.1" fill="none" stroke="#3a3a3a" stroke-width="1.35"/></svg><span class="t" style="left:15px;top:0.1px">SSAA.shader</span><span class="t" style="left:299px;top:0.1px;width:61px;text-align:right">13</span></div><div class="row" style="left:0;top:109.98px;width:464px;background:#383838"><svg class="ic" style="left:2px;top:0.2px" width="12" height="12" viewBox="0 0 12 12"><defs><linearGradient id="sg" x1="0" y1="0" x2="0" y2="1"><stop offset="0" stop-color="#eaf07a"/><stop offset="0.2" stop-color="#d6ee88"/><stop offset="0.45" stop-color="#78dcea"/><stop offset="0.7" stop-color="#9cc8f2"/><stop offset="0.8" stop-color="#b0b8f0"/><stop offset="0.83" stop-color="#e08ad8"/><stop offset="1" stop-color="#e080d2"/></linearGradient></defs><path d="M0.6 1.4 Q0.6 0.8 1.2 0.8 L8 0.8 L10.2 3 L10.2 11.1 Q10.2 11.7 9.6 11.7 L1.2 11.7 Q0.6 11.7 0.6 11.1 Z" fill="url(#sg)"/><path d="M7.2 4.6 Q7 3.6 5.4 3.6 Q3.8 3.6 3.8 4.9 Q3.8 6 5.4 6.3 Q7.2 6.6 7.2 7.9 Q7.2 9.2 5.4 9.2 Q3.8 9.2 3.6 8.1" fill="none" stroke="#3a3a3a" stroke-width="1.35"/></svg><span class="t" style="left:15px;top:0.1px">MinMaxReduction.shader</span><span class="t" style="left:299px;top:0.1px;width:61px;text-align:right">13</span></div><div class="row" style="left:0;top:122.20px;width:464px;background:#3e3e3e"><svg class="ic" style="left:2px;top:0.2px" width="12" height="12" viewBox="0 0 12 12"><defs><linearGradient id="sg" x1="0" y1="0" x2="0" y2="1"><stop offset="0" stop-color="#eaf07a"/><stop offset="0.2" stop-color="#d6ee88"/><stop offset="0.45" stop-color="#78dcea"/><stop offset="0.7" stop-color="#9cc8f2"/><stop offset="0.8" stop-color="#b0b8f0"/><stop offset="0.83" stop-color="#e08ad8"/><stop offset="1" stop-color="#e080d2"/></linearGradient></defs><path d="M0.6 1.4 Q0.6 0.8 1.2 0.8 L8 0.8 L10.2 3 L10.2 11.1 Q10.2 11.7 9.6 11.7 L1.2 11.7 Q0.6 11.7 0.6 11.1 Z" fill="url(#sg)"/><path d="M7.2 4.6 Q7 3.6 5.4 3.6 Q3.8 3.6 3.8 4.9 Q3.8 6 5.4 6.3 Q7.2 6.6 7.2 7.9 Q7.2 9.2 5.4 9.2 Q3.8 9.2 3.6 8.1" fill="none" stroke="#3a3a3a" stroke-width="1.35"/></svg><span class="t" style="left:15px;top:0.1px">CreaseApply.shader</span><span class="t" style="left:299px;top:0.1px;width:61px;text-align:right">13</span></div><div class="row" style="left:0;top:134.42px;width:464px;background:#383838"><svg class="ic" style="left:2px;top:0.2px" width="12" height="12" viewBox="0 0 12 12"><defs><linearGradient id="sg" x1="0" y1="0" x2="0" y2="1"><stop offset="0" stop-color="#eaf07a"/><stop offset="0.2" stop-color="#d6ee88"/><stop offset="0.45" stop-color="#78dcea"/><stop offset="0.7" stop-color="#9cc8f2"/><stop offset="0.8" stop-color="#b0b8f0"/><stop offset="0.83" stop-color="#e08ad8"/><stop offset="1" stop-color="#e080d2"/></linearGradient></defs><path d="M0.6 1.4 Q0.6 0.8 1.2 0.8 L8 0.8 L10.2 3 L10.2 11.1 Q10.2 11.7 9.6 11.7 L1.2 11.7 Q0.6 11.7 0.6 11.1 Z" fill="url(#sg)"/><path d="M7.2 4.6 Q7 3.6 5.4 3.6 Q3.8 3.6 3.8 4.9 Q3.8 6 5.4 6.3 Q7.2 6.6 7.2 7.9 Q7.2 9.2 5.4 9.2 Q3.8 9.2 3.6 8.1" fill="none" stroke="#3a3a3a" stroke-width="1.35"/></svg><span class="t" style="left:15px;top:0.1px">SimpleClear.shader</span><span class="t" style="left:299px;top:0.1px;width:61px;text-align:right">13</span></div><div class="row" style="left:0;top:146.64px;width:464px;background:#3e3e3e"><svg class="ic" style="left:2px;top:0.2px" width="12" height="12" viewBox="0 0 12 12"><defs><linearGradient id="sg" x1="0" y1="0" x2="0" y2="1"><stop offset="0" stop-color="#eaf07a"/><stop offset="0.2" stop-color="#d6ee88"/><stop offset="0.45" stop-color="#78dcea"/><stop offset="0.7" stop-color="#9cc8f2"/><stop offset="0.8" stop-color="#b0b8f0"/><stop offset="0.83" stop-color="#e08ad8"/><stop offset="1" stop-color="#e080d2"/></linearGradient></defs><path d="M0.6 1.4 Q0.6 0.8 1.2 0.8 L8 0.8 L10.2 3 L10.2 11.1 Q10.2 11.7 9.6 11.7 L1.2 11.7 Q0.6 11.7 0.6 11.1 Z" fill="url(#sg)"/><path d="M7.2 4.6 Q7 3.6 5.4 3.6 Q3.8 3.6 3.8 4.9 Q3.8 6 5.4 6.3 Q7.2 6.6 7.2 7.9 Q7.2 9.2 5.4 9.2 Q3.8 9.2 3.6 8.1" fill="none" stroke="#3a3a3a" stroke-width="1.35"/></svg><span class="t" style="left:15px;top:0.1px">MobileBlur.shader</span><span class="t" style="left:299px;top:0.1px;width:61px;text-align:right">13</span></div><div class="row" style="left:0;top:158.86px;width:464px;background:#383838"><svg class="ic" style="left:2px;top:0.2px" width="12" height="12" viewBox="0 0 12 12"><defs><linearGradient id="sg" x1="0" y1="0" x2="0" y2="1"><stop offset="0" stop-color="#eaf07a"/><stop offset="0.2" stop-color="#d6ee88"/><stop offset="0.45" stop-color="#78dcea"/><stop offset="0.7" stop-color="#9cc8f2"/><stop offset="0.8" stop-color="#b0b8f0"/><stop offset="0.83" stop-color="#e08ad8"/><stop offset="1" stop-color="#e080d2"/></linearGradient></defs><path d="M0.6 1.4 Q0.6 0.8 1.2 0.8 L8 0.8 L10.2 3 L10.2 11.1 Q10.2 11.7 9.6 11.7 L1.2 11.7 Q0.6 11.7 0.6 11.1 Z" fill="url(#sg)"/><path d="M7.2 4.6 Q7 3.6 5.4 3.6 Q3.8 3.6 3.8 4.9 Q3.8 6 5.4 6.3 Q7.2 6.6 7.2 7.9 Q7.2 9.2 5.4 9.2 Q3.8 9.2 3.6 8.1" fill="none" stroke="#3a3a3a" stroke-width="1.35"/></svg><span class="t" style="left:15px;top:0.1px">Blur.shader</span><span class="t" style="left:299px;top:0.1px;width:61px;text-align:right">13</span></div></div><div class="a sb" style="left:829px;top:112.7px;width:10px;height:161.8px"></div><svg class="a" style="left:831px;top:116.10000000000001px" width="8" height="5" viewBox="0 0 8 5"><path d="M0.8 4 L7 4 L3.9 0.8 Z" fill="#d0d0d0"/></svg><svg class="a" style="left:831px;top:266.0px" width="8" height="5" viewBox="0 0 8 5"><path d="M0.8 1 L7 1 L3.9 4.2 Z" fill="#d0d0d0"/></svg><div class="thumb" style="left:831px;top:124.7px;width:7px;height:95.8px"></div>
<div class="a" style="left:364px;top:305.2px;width:476px;height:184.8px;background:#383838;border:1px solid #242424"></div><div class="a hdr" style="left:365px;top:306.2px;width:474px;height:20.9px;border-bottom-width:1.5px"></div><div class="sep" style="left:639px;top:309.2px;height:14px"></div><div class="sep" style="left:734.4px;top:309.2px;height:14px"></div><span class="t ht" style="left:368px;top:312.7px">Asset Path</span><span class="t ht" style="left:643px;top:312.7px">Import Duration (ms)</span><div class="a" style="left:365px;top:326.4px;width:464px;height:162.60000000000002px;overflow:hidden"><div class="row" style="left:0;top:0.00px;width:464px;background:#3e3e3e"><svg class="ic" style="left:2px;top:0.2px" width="12" height="12" viewBox="0 0 12 12"><path d="M3 3.3 L10.2 1.4 M5.5 6.2 L2.8 8.2 M5.5 6.2 L7.8 8.2" stroke="#5a5a5a" stroke-width="0.8" fill="none"/><circle cx="2.8" cy="8.4" r="1.2" fill="#5e5e5e"/><circle cx="7.8" cy="8.4" r="1.2" fill="#5e5e5e"/><circle cx="3.1" cy="3.4" r="1.6" fill="#2f7fe6"/><circle cx="5.6" cy="6.2" r="1.6" fill="#2f7fe6"/><circle cx="10.2" cy="1.6" r="1.6" fill="#2f7fe6"/></svg><span class="t" style="left:15px;top:0.1px">ReflectionProbe-0.exr</span><span class="t" style="left:299px;top:0.1px;width:61px;text-align:right">2,118</span></div><div class="row" style="left:0;top:12.22px;width:464px;background:#383838"><svg class="ic" style="left:2px;top:0.2px" width="12" height="12" viewBox="0 0 12 12"><defs><radialGradient id="g1"><stop offset="0" stop-color="#24406f"/><stop offset="1" stop-color="#0a1228"/></radialGradient></defs><rect x="0" y="0" width="12" height="11.2" fill="url(#g1)"/></svg><span class="t" style="left:15px;top:0.1px">Gradient.tif</span><span class="t" style="left:299px;top:0.1px;width:61px;text-align:right">582</span></div><div class="row" style="left:0;top:24.44px;width:464px;background:#3e3e3e"><svg class="ic" style="left:2px;top:0.2px" width="12" height="12" viewBox="0 0 12 12"><rect x="0" y="0" width="12" height="11.2" fill="#6a4824"/><rect x="1" y="6.5" width="5" height="3.5" fill="#7c3a1e"/><rect x="2" y="1.5" width="1" height="2" fill="#3a2812"/><rect x="6" y="1.5" width="1" height="2" fill="#3a2812"/><rect x="6.5" y="0" width="2" height="0.8" fill="#a09080"/><path d="M0 5 H12" stroke="#5a3a1c" stroke-width="0.5"/></svg><span class="t" style="left:15px;top:0.1px">Chair_texture.tif</span><span class="t" style="left:299px;top:0.1px;width:61px;text-align:right">581</span></div><div class="row" style="left:0;top:36.66px;width:464px;background:#383838"><svg class="ic" style="left:2px;top:0.2px" width="12" height="12" viewBox="0 0 12 12"><path d="M0.8 3.6 L5.6 5.8 L5.6 11.5 L0.8 9.3 Z" fill="#e2e2e2"/><path d="M2.3 4.3 L4.4 5.3 L4.4 8.3 L2.3 7.1 Z" fill="#3c3c3c"/><path d="M5.6 5.8 L10.9 3.4 L10.9 9.3 L5.6 11.5 Z" fill="#8ed0f6"/><path d="M8.2 4.6 L8.2 10.4" stroke="#7cc0e8" stroke-width="0.5"/><path d="M1.3 3.1 L6.3 0.7 L8 1.6 L3.1 4 Z" fill="#a6daf6"/><path d="M5.2 5.2 L10.2 2.8 L10.9 3.4 L5.6 5.8 Z" fill="#a6daf6"/></svg><span class="t" style="left:15px;top:0.1px">Chicken_2.FBX</span><span class="t" style="left:299px;top:0.1px;width:61px;text-align:right">572</span></div><div class="row" style="left:0;top:48.88px;width:464px;background:#3e3e3e"><svg class="ic" style="left:2px;top:0.2px" width="12" height="12" viewBox="0 0 12 12"><rect x="0" y="0" width="12" height="11.2" fill="#13305a"/><rect x="0.8" y="0.4" width="10.4" height="10.4" fill="none" stroke="#0c2242" stroke-width="0.8"/><path d="M2.5 1 L9.5 1 L9.5 6 Q6 9 2.5 6 Z" fill="#a8683a"/><path d="M3.5 5 Q6 4 8.5 5 Q8 7.5 6 7.6 Q4 7.5 3.5 5 Z" fill="#143866"/><circle cx="6" cy="3" r="0.8" fill="#2a3a5a"/><rect x="1.5" y="8.5" width="9" height="1.2" fill="#2a4a7a"/></svg><span class="t" style="left:15px;top:0.1px">Tablecloth_blue_texture.tif</span><span class="t" style="left:299px;top:0.1px;width:61px;text-align:right">550</span></div><div class="row" style="left:0;top:61.10px;width:464px;background:#383838"><svg class="ic" style="left:2px;top:0.2px" width="12" height="12" viewBox="0 0 12 12"><path d="M0.8 3.6 L5.6 5.8 L5.6 11.5 L0.8 9.3 Z" fill="#e2e2e2"/><path d="M2.3 4.3 L4.4 5.3 L4.4 8.3 L2.3 7.1 Z" fill="#3c3c3c"/><path d="M5.6 5.8 L10.9 3.4 L10.9 9.3 L5.6 11.5 Z" fill="#8ed0f6"/><path d="M8.2 4.6 L8.2 10.4" stroke="#7cc0e8" stroke-width="0.5"/><path d="M1.3 3.1 L6.3 0.7 L8 1.6 L3.1 4 Z" fill="#a6daf6"/><path d="M5.2 5.2 L10.2 2.8 L10.9 3.4 L5.6 5.8 Z" fill="#a6daf6"/></svg><span class="t" style="left:15px;top:0.1px">Carpet_2_1.FBX</span><span class="t" style="left:299px;top:0.1px;width:61px;text-align:right">443</span></div><div class="row" style="left:0;top:73.32px;width:464px;background:#3e3e3e"><svg class="ic" style="left:2px;top:0.2px" width="12" height="12" viewBox="0 0 12 12"><rect x="0" y="0" width="12" height="11.2" fill="#f2f2f2"/><circle cx="5.3" cy="6" r="1.5" fill="#2ad0f0"/><circle cx="4.5" cy="6.5" r="1" fill="#203040" opacity="0.6"/></svg><span class="t" style="left:15px;top:0.1px">Lightmap-1_comp_light.exr</span><span class="t" style="left:299px;top:0.1px;width:61px;text-align:right">415</span></div><div class="row" style="left:0;top:85.54px;width:464px;background:#383838"><svg class="ic" style="left:2px;top:0.2px" width="12" height="12" viewBox="0 0 12 12"><rect x="0" y="0" width="12" height="11.2" fill="#56200a"/><circle cx="3.5" cy="4" r="1.4" fill="#8a3812"/><circle cx="8.5" cy="7.5" r="1.6" fill="#7e3410"/><circle cx="4" cy="8.5" r="0.9" fill="#b0602a"/><circle cx="9" cy="2.5" r="0.9" fill="#a05020"/><circle cx="10" cy="9.5" r="0.6" fill="#c07030"/></svg><span class="t" style="left:15px;top:0.1px">Chicken_texture.tif</span><span class="t" style="left:299px;top:0.1px;width:61px;text-align:right">415</span></div><div class="row" style="left:0;top:97.76px;width:464px;background:#3e3e3e"><svg class="ic" style="left:2px;top:0.2px" width="12" height="12" viewBox="0 0 12 12"><rect x="0" y="0" width="12" height="11.2" fill="#4a3c94"/><circle cx="6" cy="5.5" r="3.8" fill="none" stroke="#e8c0e8" stroke-width="1.3"/><circle cx="6" cy="5.5" r="1.8" fill="#d8a0e0"/><circle cx="4" cy="9.5" r="1.6" fill="#f0a050"/></svg><span class="t" style="left:15px;top:0.1px">exampleTexture.jpg</span><span class="t" style="left:299px;top:0.1px;width:61px;text-align:right">386</span></div><div class="row" style="left:0;top:109.98px;width:464px;background:#383838"><svg class="ic" style="left:2px;top:0.2px" width="12" height="12" viewBox="0 0 12 12"><rect x="0" y="0" width="12" height="11.2" fill="#050505"/><rect x="1" y="2" width="4" height="8" fill="#e8e8e8"/><rect x="2" y="1" width="3" height="2" fill="#60c8e8"/><circle cx="8.5" cy="8.5" r="2" fill="#e8e8e8"/><rect x="3" y="5" width="2" height="3" fill="#303030"/></svg><span class="t" style="left:15px;top:0.1px">Lightmap-0_comp_light.exr</span><span class="t" style="left:299px;top:0.1px;width:61px;text-align:right">385</span></div><div class="row" style="left:0;top:122.20px;width:464px;background:#3e3e3e"><svg class="ic" style="left:2px;top:0.2px" width="12" height="12" viewBox="0 0 12 12"><path d="M0.8 3.6 L5.6 5.8 L5.6 11.5 L0.8 9.3 Z" fill="#e2e2e2"/><path d="M2.3 4.3 L4.4 5.3 L4.4 8.3 L2.3 7.1 Z" fill="#3c3c3c"/><path d="M5.6 5.8 L10.9 3.4 L10.9 9.3 L5.6 11.5 Z" fill="#8ed0f6"/><path d="M8.2 4.6 L8.2 10.4" stroke="#7cc0e8" stroke-width="0.5"/><path d="M1.3 3.1 L6.3 0.7 L8 1.6 L3.1 4 Z" fill="#a6daf6"/><path d="M5.2 5.2 L10.2 2.8 L10.9 3.4 L5.6 5.8 Z" fill="#a6daf6"/></svg><span class="t" style="left:15px;top:0.1px">Chicken_1.FBX</span><span class="t" style="left:299px;top:0.1px;width:61px;text-align:right">262</span></div><div class="row" style="left:0;top:134.42px;width:464px;background:#383838"><svg class="ic" style="left:2px;top:0.2px" width="12" height="12" viewBox="0 0 12 12"><rect x="0" y="0" width="12" height="11.2" fill="#1e1e1e"/></svg><span class="t" style="left:15px;top:0.1px">Carpet_2_specular.tif</span><span class="t" style="left:299px;top:0.1px;width:61px;text-align:right">244</span></div><div class="row" style="left:0;top:146.64px;width:464px;background:#3e3e3e"><svg class="ic" style="left:2px;top:0.2px" width="12" height="12" viewBox="0 0 12 12"><path d="M0.8 3.6 L5.6 5.8 L5.6 11.5 L0.8 9.3 Z" fill="#e2e2e2"/><path d="M2.3 4.3 L4.4 5.3 L4.4 8.3 L2.3 7.1 Z" fill="#3c3c3c"/><path d="M5.6 5.8 L10.9 3.4 L10.9 9.3 L5.6 11.5 Z" fill="#8ed0f6"/><path d="M8.2 4.6 L8.2 10.4" stroke="#7cc0e8" stroke-width="0.5"/><path d="M1.3 3.1 L6.3 0.7 L8 1.6 L3.1 4 Z" fill="#a6daf6"/><path d="M5.2 5.2 L10.2 2.8 L10.9 3.4 L5.6 5.8 Z" fill="#a6daf6"/></svg><span class="t" style="left:15px;top:0.1px">Chair.FBX</span><span class="t" style="left:299px;top:0.1px;width:61px;text-align:right">236</span></div><div class="row" style="left:0;top:158.86px;width:464px;background:#383838"><svg class="ic" style="left:2px;top:0.2px" width="12" height="12" viewBox="0 0 12 12"><path d="M0.8 3.6 L5.6 5.8 L5.6 11.5 L0.8 9.3 Z" fill="#e2e2e2"/><path d="M2.3 4.3 L4.4 5.3 L4.4 8.3 L2.3 7.1 Z" fill="#3c3c3c"/><path d="M5.6 5.8 L10.9 3.4 L10.9 9.3 L5.6 11.5 Z" fill="#8ed0f6"/><path d="M8.2 4.6 L8.2 10.4" stroke="#7cc0e8" stroke-width="0.5"/><path d="M1.3 3.1 L6.3 0.7 L8 1.6 L3.1 4 Z" fill="#a6daf6"/><path d="M5.2 5.2 L10.2 2.8 L10.9 3.4 L5.6 5.8 Z" fill="#a6daf6"/></svg><span class="t" style="left:15px;top:0.1px">Cup.FBX</span><span class="t" style="left:299px;top:0.1px;width:61px;text-align:right">230</span></div></div><div class="a sb" style="left:829px;top:326.4px;width:10px;height:162.60000000000002px"></div><svg class="a" style="left:831px;top:329.79999999999995px" width="8" height="5" viewBox="0 0 8 5"><path d="M0.8 4 L7 4 L3.9 0.8 Z" fill="#d0d0d0"/></svg><svg class="a" style="left:831px;top:480.5px" width="8" height="5" viewBox="0 0 8 5"><path d="M0.8 1 L7 1 L3.9 4.2 Z" fill="#d0d0d0"/></svg><div class="thumb" style="left:831px;top:339.2px;width:7px;height:95.80000000000001px"></div>
<div class="a" style="left:0;top:0;width:850px;height:15px;background:#282828;border-top:1px solid #1e1e1e"></div>
<div class="a" style="left:0;top:0;width:1px;height:530px;background:#242424"></div>
<div class="a" style="left:1px;top:1px;width:78px;height:14px;background:#3c3c3c;border-top:1.5px solid #3a79bb"></div>
<span class="t" style="left:6px;top:3.4px;font-size:9.8px;color:#d2d2d2">Import Activity</span>
<div class="a" style="left:838.5px;top:3.8px;width:1.7px;height:1.7px;border-radius:1px;background:#c8c8c8;box-shadow:0 3px 0 #c8c8c8,0 6px 0 #c8c8c8"></div>
<div class="a" style="left:1px;top:15px;width:848px;height:14px;background:#3b3b3b"></div>
<div class="a" style="left:1px;top:28.7px;width:349px;height:1.3px;background:#242424"></div>
<div class="a" style="left:6px;top:16px;width:80px;height:15.7px;border:2px solid #e8141e;background:#3a3a3a;box-shadow:inset 0 0 0 1px #283434"></div>
<span class="t" style="left:11.5px;top:17.5px;color:#8a8a8a">Show Overview</span>
<div class="a" style="left:90.8px;top:15px;width:1.6px;height:14px;background:#303030"></div>
<span class="t" style="left:94.8px;top:17.6px;color:#d2d2d2">Options</span>
<svg class="a" style="left:174px;top:21px" width="8" height="5" viewBox="0 0 8 5"><path d="M0.3 0.6 L6.6 0.6 L3.45 3.8 Z" fill="#d0d0d0"/></svg>
<div class="a" style="left:619.4px;top:15.2px;width:228.5px;height:12.4px;background:#2a2a2a;border-radius:3px;border-top:1px solid #1a1a1a"></div>
<svg class="a" style="left:622px;top:18.5px" width="8" height="7" viewBox="0 0 8 7"><circle cx="2.8" cy="2.8" r="1.9" fill="none" stroke="#c8c8c8" stroke-width="1.2"/><path d="M4.2 4.2 L6.3 6.3" stroke="#c8c8c8" stroke-width="1.4"/></svg>
<div class="a" style="left:0;top:528.3px;width:850px;height:1.7px;background:#242424"></div>
</div></body></html>
